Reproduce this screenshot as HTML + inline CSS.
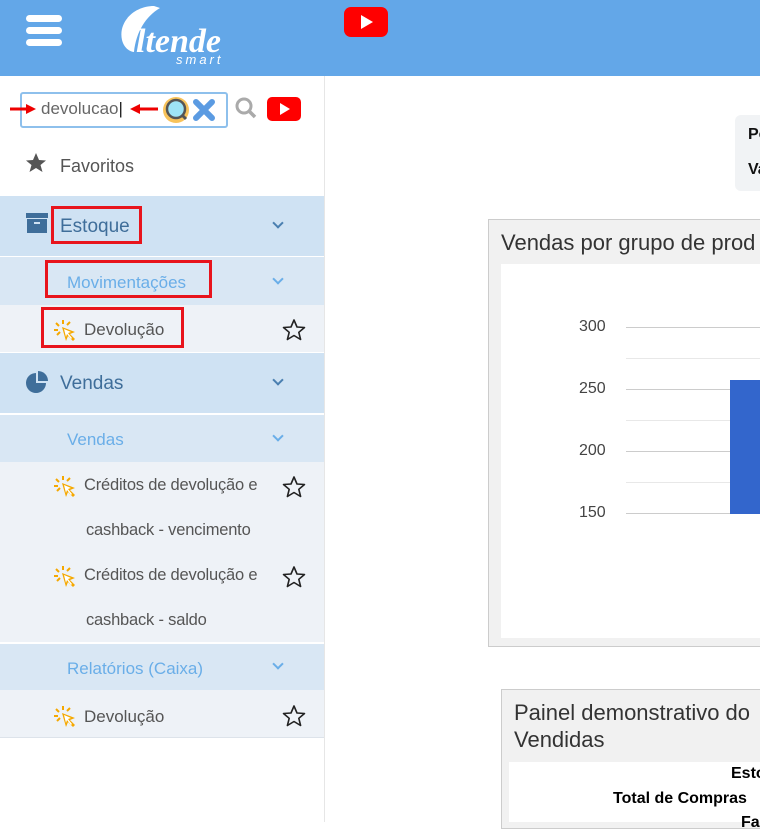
<!DOCTYPE html>
<html><head><meta charset="utf-8"><style>
*{margin:0;padding:0;box-sizing:border-box}
body{width:760px;height:822px;overflow:hidden;background:#fff;font-family:"Liberation Sans",sans-serif;position:relative}
.a{position:absolute}
.hdr{left:0;top:0;width:760px;height:76px;background:#63a7e8}
.side{left:0;top:76px;width:325px;height:746px;border-right:1px solid #e6e6e6;background:#fff}
.row{position:absolute;left:0;width:324px}
.t{position:absolute;font-size:17px;color:#555;white-space:nowrap}
.sub{color:#6aaee8;font-size:17px}
.chev{position:absolute;width:8px;height:8px;border-right:2px solid #4a7fb0;border-bottom:2px solid #4a7fb0;transform:rotate(45deg)}
.chev.l{border-color:#6aaee8}
.red{position:absolute;border:3px solid #e8141c}
.star{position:absolute}
.gl{position:absolute;left:626px;width:134px;height:1px;background:#e8e8e8}
.gl.m{background:#ccc}
.yl{position:absolute;left:579px;font-size:16px;color:#444}
</style></head><body>
<div class="a hdr"></div>
<div class="a" style="left:26px;top:15px;width:36px;height:7px;background:#fff;border-radius:4px"></div>
<div class="a" style="left:26px;top:27px;width:36px;height:7px;background:#fff;border-radius:4px"></div>
<div class="a" style="left:26px;top:39px;width:36px;height:7px;background:#fff;border-radius:4px"></div>
<svg class="a" style="left:114px;top:2px" width="130" height="64" viewBox="0 0 130 64">
<path d="M40 4 C20 4 4 20 8 38 C10 46 16 50 20 50 C22 30 32 14 46 6 Z" fill="#fff"/>
<text x="22" y="50" font-family="Liberation Serif" font-style="italic" font-weight="bold" font-size="34" fill="#fff">ltende</text>
<text x="62" y="62" font-family="Liberation Sans" font-style="italic" font-size="13" fill="#fff" letter-spacing="3">smart</text>
</svg>
<svg class="a" style="left:344px;top:7px" width="44" height="30" viewBox="0 0 44 30"><rect width="44" height="30" rx="7" fill="#f00"/><path d="M17 8 L29 15 L17 22Z" fill="#fff"/></svg>

<div class="a side"></div>
<div class="a" style="left:20px;top:92px;width:208px;height:36px;border:2px solid #8ec0ec;border-radius:3px;background:#fff"></div>
<div class="t" style="left:41px;top:99px;color:#666;font-size:17px">devolucao<span style="color:#222">|</span></div>
<svg class="a" style="left:8px;top:100px" width="30" height="18"><path d="M2 9 H20" stroke="#e00" stroke-width="3"/><path d="M18 4 L28 9 L18 14Z" fill="#e00"/></svg>
<svg class="a" style="left:128px;top:100px" width="32" height="18"><path d="M10 9 H30" stroke="#e00" stroke-width="3"/><path d="M12 4 L2 9 L12 14Z" fill="#e00"/></svg>
<svg class="a" style="left:160px;top:94px" width="60" height="32"><circle cx="16" cy="16" r="13" fill="#f8c35a"/><circle cx="16" cy="15" r="9" fill="#9ee4f6" stroke="#555" stroke-width="2.5"/><path d="M22 21 L26 25" stroke="#555" stroke-width="3"/><path d="M36 8 L52 24 M52 8 L36 24" stroke="#5b9be2" stroke-width="6" stroke-linecap="round"/></svg>
<svg class="a" style="left:234px;top:96px" width="24" height="24"><circle cx="10" cy="10" r="7" fill="none" stroke="#aaa" stroke-width="3"/><path d="M15 15 L21 21" stroke="#aaa" stroke-width="3.5"/></svg>
<svg class="a" style="left:267px;top:97px" width="34" height="24"><rect width="34" height="24" rx="5" fill="#f00"/><path d="M13 6 L23 12 L13 18Z" fill="#fff"/></svg>

<svg class="a" style="left:25px;top:152px" width="22" height="21"><path d="M11 1 L14 8 L21 8.5 L15.5 13 L17.5 20 L11 16 L4.5 20 L6.5 13 L1 8.5 L8 8Z" fill="#555"/></svg>
<div class="t" style="left:60px;top:156px;color:#555;font-size:18px">Favoritos</div>

<div class="row" style="top:196px;height:60px;background:#cfe2f3"></div>
<svg class="a" style="left:26px;top:213px" width="22" height="20"><rect x="0" y="0" width="22" height="5" fill="#3f6e9a"/><rect x="1" y="6" width="20" height="14" fill="#3f6e9a"/><rect x="8" y="9" width="6" height="2" fill="#cfe2f3"/></svg>
<div class="t" style="left:60px;top:216px;color:#3f6e9a;font-size:19px">Estoque</div>
<div class="chev" style="left:274px;top:219px"></div>
<div class="red" style="left:51px;top:206px;width:91px;height:38px"></div>

<div class="row" style="top:257px;height:48px;background:#d9e7f4"></div>
<div class="t sub" style="left:67px;top:273px">Movimentações</div>
<div class="chev l" style="left:274px;top:275px"></div>
<div class="red" style="left:45px;top:260px;width:167px;height:38px"></div>

<div class="row" style="top:305px;height:47px;background:#eef2f7"></div>
<svg class="a ic" style="left:54px;top:319px" width="24" height="22"><g stroke="#f5a800" stroke-width="2"><path d="M9 1 V5 M2 4 L5 7 M0 11 H4 M16 3 L13 6 M3 16 L6 13"/></g><path d="M8 8 L21 13 L16 15 L21 20 L19 22 L14 17 L12 22Z" fill="#f5a800"/><path d="M10 10 L17 13 L14 14 L18 19 L17 20 L13 15 L12 18Z" fill="#fff"/></svg>
<div class="t" style="left:84px;top:320px">Devolução</div>
<svg class="star" style="left:282px;top:318px" width="24" height="23"><path d="M12 2 L15 9 L22.5 9.5 L16.8 14.3 L18.6 21.5 L12 17.5 L5.4 21.5 L7.2 14.3 L1.5 9.5 L9 9Z" fill="none" stroke="#222" stroke-width="1.6" stroke-linejoin="round"/></svg>
<div class="red" style="left:41px;top:307px;width:143px;height:41px"></div>

<div class="row" style="top:353px;height:60px;background:#cfe2f3"></div>
<svg class="a" style="left:24px;top:370px" width="24" height="24"><path d="M12 3 A10 10 0 1 0 22 13 L12 13Z" fill="#3f6e9a"/><path d="M14 1 A10 10 0 0 1 24 11 L14 11Z" fill="#3f6e9a"/></svg>
<div class="t" style="left:60px;top:373px;color:#3f6e9a;font-size:19px">Vendas</div>
<div class="chev" style="left:274px;top:376px"></div>

<div class="row" style="top:415px;height:47px;background:#d9e7f4"></div>
<div class="t sub" style="left:67px;top:430px">Vendas</div>
<div class="chev l" style="left:274px;top:432px"></div>

<div class="row" style="top:462px;height:180px;background:#eef2f7"></div>
<svg class="a" style="left:54px;top:475px" width="24" height="22"><g stroke="#f5a800" stroke-width="2"><path d="M9 1 V5 M2 4 L5 7 M0 11 H4 M16 3 L13 6 M3 16 L6 13"/></g><path d="M8 8 L21 13 L16 15 L21 20 L19 22 L14 17 L12 22Z" fill="#f5a800"/><path d="M10 10 L17 13 L14 14 L18 19 L17 20 L13 15 L12 18Z" fill="#fff"/></svg>
<div class="t" style="left:84px;top:476px;font-size:16.5px;letter-spacing:-0.2px">Créditos de devolução e</div>
<div class="t" style="left:86px;top:521px;font-size:16.5px;letter-spacing:-0.2px">cashback - vencimento</div>
<svg class="star" style="left:282px;top:475px" width="24" height="23"><path d="M12 2 L15 9 L22.5 9.5 L16.8 14.3 L18.6 21.5 L12 17.5 L5.4 21.5 L7.2 14.3 L1.5 9.5 L9 9Z" fill="none" stroke="#222" stroke-width="1.6" stroke-linejoin="round"/></svg>
<svg class="a" style="left:54px;top:565px" width="24" height="22"><g stroke="#f5a800" stroke-width="2"><path d="M9 1 V5 M2 4 L5 7 M0 11 H4 M16 3 L13 6 M3 16 L6 13"/></g><path d="M8 8 L21 13 L16 15 L21 20 L19 22 L14 17 L12 22Z" fill="#f5a800"/><path d="M10 10 L17 13 L14 14 L18 19 L17 20 L13 15 L12 18Z" fill="#fff"/></svg>
<div class="t" style="left:84px;top:566px;font-size:16.5px;letter-spacing:-0.2px">Créditos de devolução e</div>
<div class="t" style="left:86px;top:611px;font-size:16.5px;letter-spacing:-0.2px">cashback - saldo</div>
<svg class="star" style="left:282px;top:565px" width="24" height="23"><path d="M12 2 L15 9 L22.5 9.5 L16.8 14.3 L18.6 21.5 L12 17.5 L5.4 21.5 L7.2 14.3 L1.5 9.5 L9 9Z" fill="none" stroke="#222" stroke-width="1.6" stroke-linejoin="round"/></svg>

<div class="row" style="top:644px;height:46px;background:#d9e7f4"></div>
<div class="t sub" style="left:67px;top:659px">Relatórios (Caixa)</div>
<div class="chev l" style="left:274px;top:660px"></div>

<div class="row" style="top:690px;height:48px;background:#eef2f7;border-bottom:1px solid #dde3ea"></div>
<svg class="a" style="left:54px;top:705px" width="24" height="22"><g stroke="#f5a800" stroke-width="2"><path d="M9 1 V5 M2 4 L5 7 M0 11 H4 M16 3 L13 6 M3 16 L6 13"/></g><path d="M8 8 L21 13 L16 15 L21 20 L19 22 L14 17 L12 22Z" fill="#f5a800"/><path d="M10 10 L17 13 L14 14 L18 19 L17 20 L13 15 L12 18Z" fill="#fff"/></svg>
<div class="t" style="left:84px;top:707px">Devolução</div>
<svg class="star" style="left:282px;top:704px" width="24" height="23"><path d="M12 2 L15 9 L22.5 9.5 L16.8 14.3 L18.6 21.5 L12 17.5 L5.4 21.5 L7.2 14.3 L1.5 9.5 L9 9Z" fill="none" stroke="#222" stroke-width="1.6" stroke-linejoin="round"/></svg>

<!-- main -->
<div class="a" style="left:735px;top:115px;width:40px;height:76px;background:#f1f3f5;border-radius:6px"></div>
<div class="t" style="left:748px;top:126px;color:#111;font-size:16px;font-weight:bold">Po</div>
<div class="t" style="left:748px;top:161px;color:#111;font-size:16px;font-weight:bold">Va</div>

<div class="a" style="left:488px;top:219px;width:280px;height:428px;border:1px solid #ccc;background:#f1f1f1"></div>
<div class="t" style="left:501px;top:230px;color:#333;font-size:22px">Vendas por grupo de prod</div>
<div class="a" style="left:501px;top:264px;width:259px;height:374px;background:#fff"></div>
<div class="gl m" style="top:327px"></div><div class="gl" style="top:358px"></div>
<div class="gl m" style="top:389px"></div><div class="gl" style="top:420px"></div>
<div class="gl m" style="top:451px"></div><div class="gl" style="top:482px"></div>
<div class="gl m" style="top:513px"></div>
<div class="yl" style="top:318px">300</div><div class="yl" style="top:380px">250</div>
<div class="yl" style="top:442px">200</div><div class="yl" style="top:504px">150</div>
<div class="a" style="left:730px;top:380px;width:30px;height:134px;background:#3366cc"></div>

<div class="a" style="left:501px;top:689px;width:270px;height:140px;border:1px solid #ccc;background:#f1f1f1"></div>
<div class="t" style="left:514px;top:700px;color:#333;font-size:22px">Painel demonstrativo do</div>
<div class="t" style="left:514px;top:727px;color:#333;font-size:22px">Vendidas</div>
<div class="a" style="left:509px;top:762px;width:251px;height:60px;background:#fff"></div>
<div class="t" style="left:731px;top:765px;color:#000;font-size:16px;font-weight:bold">Esto</div>
<div class="t" style="left:613px;top:790px;color:#000;font-size:16px;font-weight:bold">Total de Compras</div>
<div class="t" style="left:741px;top:814px;color:#000;font-size:16px;font-weight:bold">Fa</div>
</body></html>
